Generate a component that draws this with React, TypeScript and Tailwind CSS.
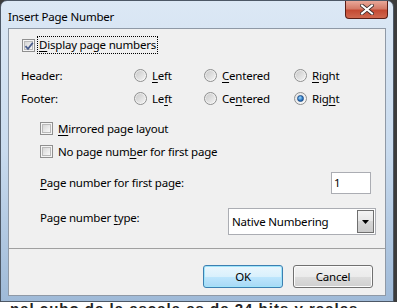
import React from 'react';

const U = ({ children }: { children: React.ReactNode }) => (
  <span className="underline decoration-1 underline-offset-[2px]">{children}</span>
);

const CheckBox = ({ checked }: { checked?: boolean }) => (
  <span className="relative flex h-[13px] w-[13px] shrink-0 items-center justify-center border border-[#8f8f8f] bg-[#f4f4f4]">
    <span className="h-[9px] w-[9px] border border-[#b9b9b9] bg-linear-to-br from-[#d6d6d6] to-[#f9f9f9]" />
    {checked && (
      <svg className="absolute left-[1px] top-[1px]" width="10" height="10" viewBox="0 0 10 10">
        <path d="M1.5 5.2 L4 7.8 L8.8 1.8" fill="none" stroke="#4a5d8c" strokeWidth="1.8" />
      </svg>
    )}
  </span>
);

const Radio = ({ checked }: { checked?: boolean }) => (
  <span className="flex h-[13px] w-[13px] shrink-0 items-center justify-center rounded-full border border-[#8e8f8f] bg-linear-to-br from-[#e4e4e4] to-[#fbfbfb]">
    {checked ? (
      <span className="h-[7px] w-[7px] rounded-full border border-[#1e4f8a] bg-[radial-gradient(circle_at_40%_35%,#9edcff,#2a74c0_60%,#1b4d8a)]" />
    ) : (
      <span className="h-[9px] w-[9px] rounded-full bg-linear-to-br from-[#cbcbcb] to-[#f2f2f2]" />
    )}
  </span>
);

const RadioOpt = ({ checked, children, w }: { checked?: boolean; children: React.ReactNode; w: string }) => (
  <div className={`flex items-center gap-[5px] ${w}`}>
    <Radio checked={checked} />
    <span>{children}</span>
  </div>
);

const Btn = ({ children, primary }: { children: React.ReactNode; primary?: boolean }) => (
  <button
    className={`flex h-[23px] w-[80px] items-center justify-center rounded-[3px] border text-black ${
      primary
        ? 'border-[#3c7fb1] bg-[linear-gradient(#eaf6fd_0%,#d9f0fc_50%,#bee6fd_50%,#a7d9f5_100%)] shadow-[inset_0_0_0_1px_#9fe4fa]'
        : 'border-[#707070] bg-[linear-gradient(#f2f2f2_0%,#ebebeb_50%,#dddddd_50%,#cfcfcf_100%)] shadow-[inset_0_0_0_1px_#fcfcfc]'
    }`}
  >
    {children}
  </button>
);

export default function App() {
  return (
    <div className="relative h-[308px] w-[397px] overflow-hidden bg-[#3c3c3c] font-['Noto_Sans',sans-serif] text-[11.5px] leading-[16px] tracking-[-0.2px] text-black">
      {/* window */}
      <div className="flex h-[302px] w-[394px] flex-col rounded-t-[7px] border border-[#4d5866] bg-linear-to-b from-[#dce8f5] via-[#c9dbee] to-[#9fbad8] px-[7px] pb-[4px]">
        <div className="flex h-[27px] shrink-0 items-start">
          <span className="pt-[9px] leading-[14px] text-black">Insert Page Number</span>
          <div className="ml-auto mr-[-2px] flex h-[18px] w-[43px] items-center justify-center rounded-b-[4px] border border-t-0 border-[#5a1e16] bg-[linear-gradient(#e9a899_0%,#d47b68_45%,#c44a33_55%,#d0684f_100%)]">
            <svg width="14" height="11" viewBox="0 0 14 11">
              <path d="M2 1.5 L12 9.5 M12 1.5 L2 9.5" stroke="#3a2a2a" strokeWidth="3.6" strokeLinecap="square" />
              <path d="M2 1.5 L12 9.5 M12 1.5 L2 9.5" stroke="#ffffff" strokeWidth="2" strokeLinecap="square" />
            </svg>
          </div>
        </div>

        {/* client */}
        <div className="flex h-[268px] w-[378px] flex-col border border-[#8f99a6] bg-[#f0f0f0]">
          <div className="mt-[7px] flex h-[18px] items-center pl-[13px]">
            <CheckBox checked />
            <span className="ml-[2px] border border-dotted border-black px-[1px] leading-[16px]">
              <U>D</U>isplay page numbers
            </span>
          </div>

          <div className="mt-[10px] flex h-[23px] items-center pl-[12px]">
            <span className="w-[113px]">Header:</span>
            <RadioOpt w="w-[70px]">
              <U>L</U>eft
            </RadioOpt>
            <RadioOpt w="w-[90px]">
              <U>C</U>entered
            </RadioOpt>
            <RadioOpt w="w-[80px]">
              <U>R</U>ight
            </RadioOpt>
          </div>
          <div className="flex h-[23px] items-center pl-[12px]">
            <span className="w-[113px]">Footer:</span>
            <RadioOpt w="w-[70px]">
              Le<U>f</U>t
            </RadioOpt>
            <RadioOpt w="w-[90px]">
              Ce<U>n</U>tered
            </RadioOpt>
            <RadioOpt w="w-[80px]" checked>
              Rig<U>h</U>t
            </RadioOpt>
          </div>

          <div className="mt-[7px] flex h-[23px] items-center gap-[5px] pl-[31px]">
            <CheckBox />
            <span>
              <U>M</U>irrored page layout
            </span>
          </div>
          <div className="flex h-[23px] items-center gap-[5px] pl-[31px]">
            <CheckBox />
            <span>
              No page num<U>b</U>er for first page
            </span>
          </div>

          <div className="mt-[9px] flex h-[22px] items-center pl-[31px]">
            <span className="w-[291px]">
              <U>P</U>age number for first page:
            </span>
            <div className="flex h-[22px] w-[40px] items-center border border-[#abadb3] bg-white pl-[2px]">1</div>
          </div>

          <div className="mt-[14px] flex h-[27px] items-start pl-[31px]">
            <span className="mt-[1px] h-[18px] w-[188px] leading-[18px]">
              Page number <U>t</U>ype:
            </span>
            <div className="flex h-[27px] w-[148px] items-center border border-[#abadb3] bg-white pl-[3px]">
              <span>Native Numbering</span>
              <div className="ml-auto mr-[1px] flex h-[23px] w-[17px] items-center justify-center border border-[#6f6f6f] bg-[linear-gradient(#f4f4f4_0%,#e6e6e6_50%,#d6d6d6_50%,#cbcbcb_100%)]">
                <svg width="7" height="4" viewBox="0 0 7 4">
                  <path d="M0 0 H7 L3.5 4 Z" fill="#000" />
                </svg>
              </div>
            </div>
          </div>

          <div className="mt-[13px] h-[1px] w-full bg-[#a0a0a0]" />

          <div className="mt-[16px] flex justify-end gap-[10px] pr-[12px]">
            <Btn primary>OK</Btn>
            <Btn>Cancel</Btn>
          </div>
        </div>
      </div>
      {/* document text behind the dialog */}
      <div className="h-[6px] w-full overflow-hidden bg-white">
        <div className="-mt-[1px] whitespace-nowrap pl-[10px] font-['Liberation_Sans',sans-serif] text-[15px] font-bold leading-[16px] tracking-[1px] text-[#222]">
          nal cubo de la escala es de 24 bits y reales
        </div>
      </div>
    </div>
  );
}
